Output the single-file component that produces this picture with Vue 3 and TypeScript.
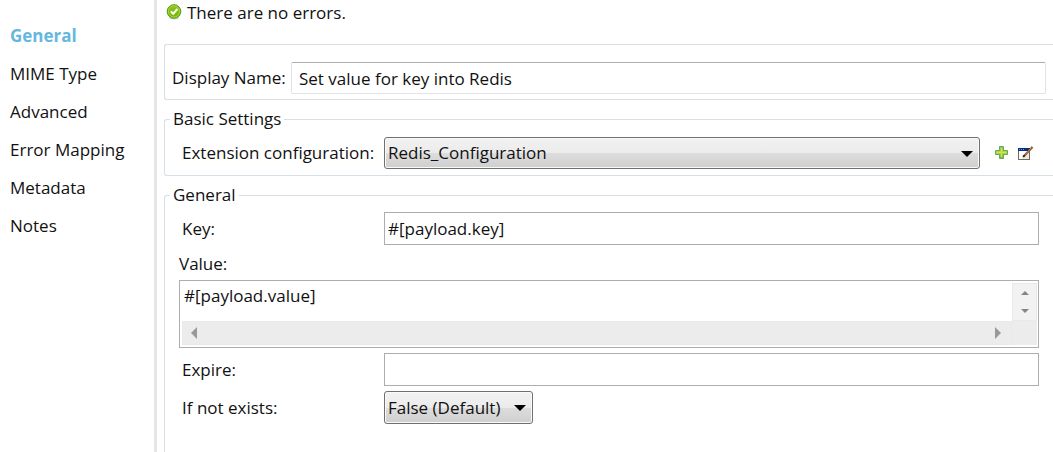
<script setup lang="ts">
import { ref } from 'vue'

const tabs: string[] = ['General', 'MIME Type', 'Advanced', 'Error Mapping', 'Metadata', 'Notes']
const active = ref('General')
const displayName = ref('Set value for key into Redis')
const config = ref('Redis_Configuration')
const key = ref('#[payload.key]')
const payload = ref('#[payload.value]')
const expire = ref('')
const ifNotExists = ref('False (Default)')
</script>

<template>
  <div class="page">
    <nav class="sidebar">
      <button
        v-for="tab in tabs"
        :key="tab"
        type="button"
        class="tab"
        :class="{ active: tab === active }"
        @click="active = tab"
      >{{ tab }}</button>
    </nav>

    <main class="main">
      <div class="status">
        <svg class="ok" width="16" height="16" viewBox="0 0 16 16" aria-hidden="true">
          <defs>
            <linearGradient id="okFill" x1="0" y1="0" x2="0" y2="1">
              <stop offset="0" stop-color="#8fc31a" />
              <stop offset="1" stop-color="#74b800" />
            </linearGradient>
          </defs>
          <ellipse cx="8" cy="14" rx="5" ry="1.5" fill="#dcdcdc" />
          <circle cx="8" cy="7.5" r="6.8" fill="url(#okFill)" stroke="#4f9a14" />
          <circle cx="8" cy="7.5" r="5.6" fill="none" stroke="#b4db55" stroke-width="0.8" />
          <path d="M4.8 7.4 7.2 9.800 11.3 5" fill="none" stroke="#fff" stroke-width="2" />
        </svg>
        <span>There are no errors.</span>
      </div>

      <section class="group name-group">
        <label for="display-name">Display Name:</label>
        <input id="display-name" v-model="displayName" class="name-input" type="text">
      </section>

      <fieldset class="group basic">
        <legend>Basic Settings</legend>
        <div class="row">
          <label class="caption" for="config">Extension configuration:</label>
          <div class="combo wide">
            <select id="config" v-model="config">
              <option>Redis_Configuration</option>
            </select>
            <svg class="arrow" width="12" height="6" viewBox="0 0 12 6" aria-hidden="true">
              <path d="M0 0H12L6 6Z" fill="#000" />
            </svg>
          </div>
          <button type="button" class="icon-button add" aria-label="Add configuration">
            <svg width="14" height="14" viewBox="0 0 14 14">
              <defs>
                <linearGradient id="plusFill" x1="0" y1="0" x2="0" y2="1">
                  <stop offset="0" stop-color="#86c66c" />
                  <stop offset="0.5" stop-color="#b9d836" />
                  <stop offset="1" stop-color="#6fb650" />
                </linearGradient>
              </defs>
              <path d="M4.500 0.500H8.500V4.500H12.500V8.500H8.500V12.500H4.500V8.500H0.500V4.500H4.500Z" fill="url(#plusFill)" stroke="#65a957" />
              <path d="M6.500 2V11M2 6.500H11" stroke="#cfe45c" fill="none" />
            </svg>
          </button>
          <button type="button" class="icon-button edit" aria-label="Edit configuration">
            <svg width="16" height="15" viewBox="0 0 16 15">
              <rect x="0.5" y="2.5" width="11" height="11" fill="#fff" stroke="#716d57" />
              <rect x="0" y="2" width="12" height="3" fill="#0a2a86" />
              <path d="M1 3.500H6" stroke="#5aa0ee" stroke-dasharray="1 1" />
              <path d="M3 13 11 5V13Z" fill="#e8e8e8" />
              <path d="M5.500 10.500 14.500 1" stroke="#6b4521" stroke-width="2" />
              <path d="M7 8.700 13.700 1.600" stroke="#e7a243" stroke-width="1" />
              <path d="M5 11 6.500 9.500" stroke="#222" stroke-width="1.500" />
            </svg>
          </button>
        </div>
      </fieldset>

      <fieldset class="group general">
        <legend>General</legend>
        <div class="row">
          <label class="caption" for="key">Key:</label>
          <input id="key" v-model="key" class="field" type="text">
        </div>
        <label class="value-label" for="value">Value:</label>
        <div class="editor">
          <textarea id="value" v-model="payload" wrap="off"></textarea>
          <div class="vbar">
            <button type="button" aria-label="Scroll up">
              <svg width="8" height="4" viewBox="0 0 8 4"><path d="M0 4 4 0 8 4Z" fill="#858585" /></svg>
            </button>
            <button type="button" aria-label="Scroll down">
              <svg width="8" height="4" viewBox="0 0 8 4"><path d="M0 0H8L4 4Z" fill="#858585" /></svg>
            </button>
          </div>
          <div class="hbar">
            <button type="button" aria-label="Scroll left">
              <svg width="6" height="12" viewBox="0 0 6 12"><path d="M6 0V12L0 6Z" fill="#999" /></svg>
            </button>
            <button type="button" aria-label="Scroll right">
              <svg width="6" height="12" viewBox="0 0 6 12"><path d="M0 0V12L6 6Z" fill="#999" /></svg>
            </button>
          </div>
          <div class="corner"></div>
        </div>
        <div class="row spaced">
          <label class="caption" for="expire">Expire:</label>
          <input id="expire" v-model="expire" class="field" type="text">
        </div>
        <div class="row spaced">
          <label class="caption" for="if-not-exists">If not exists:</label>
          <div class="combo small">
            <select id="if-not-exists" v-model="ifNotExists">
              <option>False (Default)</option>
              <option>True</option>
            </select>
            <svg class="arrow" width="12" height="6" viewBox="0 0 12 6" aria-hidden="true">
              <path d="M0 0H12L6 6Z" fill="#000" />
            </svg>
          </div>
        </div>
      </fieldset>
    </main>
  </div>
</template>

<style>
body {
  margin: 0;
  background: #fff;
}
</style>

<style scoped>
.page {
  display: flex;
  height: 100vh;
  overflow: hidden;
  background: #fff;
  color: #111;
  font: 17px/24px "Open Sans", "Noto Sans", sans-serif;
}
.page * {
  box-sizing: border-box;
}
button,
input,
select,
textarea {
  margin: 0;
  border: 0;
  font: inherit;
  color: inherit;
  outline: none;
}
.sidebar {
  flex: 0 0 157px;
  display: flex;
  flex-direction: column;
  padding-top: 17px;
  border-right: 3px solid #e6e6e6;
}
.tab {
  height: 38px;
  padding: 0 10px;
  background: none;
  text-align: left;
  white-space: nowrap;
}
.tab.active {
  color: #66b7de;
  font-weight: 700;
}
.main {
  flex: 1;
  min-width: 0;
  display: flex;
  flex-direction: column;
  padding-left: 7px;
}
.status {
  display: flex;
  align-items: center;
  gap: 5px;
  height: 26px;
  padding-left: 2px;
}
.ok {
  margin-bottom: 3px;
}
.group {
  min-width: 0;
  margin: 0;
  border: 1px solid #d5dfe5;
  border-right: 0;
  border-radius: 3px 0 0 3px;
}
.name-group {
  display: flex;
  align-items: center;
  gap: 4px;
  margin-top: 18px;
  padding: 17px 7px 5px 7px;
}
.name-group label {
  flex: 0 0 115px;
}
.name-input {
  flex: 1;
  min-width: 0;
  height: 32px;
  padding: 0 7px;
  border: 1px solid #e2e3ea;
  border-top-color: #abadb3;
  border-radius: 2px;
}
legend {
  margin-left: -9px;
  padding: 0 3px;
}
.basic,
.general {
  margin-top: 7px;
  padding: 6px 14px;
}
.general {
  flex: 1 0 auto;
  padding-top: 5px;
  border-bottom: 0;
  border-radius: 3px 0 0 0;
}
.row {
  display: flex;
  align-items: center;
}
.spaced {
  margin-top: 5px;
}
.caption {
  flex: 0 0 205px;
  padding-left: 3px;
  white-space: nowrap;
}
.combo {
  position: relative;
}
.wide {
  flex: 1;
}
.wide select {
  height: 32px;
}
.small {
  flex: 0 0 149px;
}
select {
  display: block;
  width: 100%;
  height: 33px;
  padding: 0 24px 0 3px;
  border: 1px solid #707070;
  border-radius: 3px;
  appearance: none;
  background: linear-gradient(#f2f2f2, #ebebeb 50%, #dddddd 50%, #cfcfcf);
  box-shadow: inset 0 0 0 1px #fafafa;
}
.arrow {
  position: absolute;
  top: 14px;
  right: 7px;
  pointer-events: none;
}
.icon-button {
  display: flex;
  padding: 0;
  background: none;
}
.add {
  margin-left: 15px;
}
.edit {
  margin: 0 5px 0 9px;
}
.field {
  flex: 1;
  min-width: 0;
  height: 33px;
  padding: 0 3px;
  border: 1px solid #abadb3;
}
.value-label {
  display: block;
  height: 35px;
  line-height: 37px;
}
.editor {
  display: grid;
  grid-template-columns: 1fr 25px;
  grid-template-rows: 38px 24px;
  padding: 2px 1px 2px 2px;
  border: 1px solid #abadb3;
}
textarea {
  display: block;
  padding: 1px 2px;
  resize: none;
  overflow: hidden;
  background: none;
}
.vbar,
.hbar {
  display: flex;
  justify-content: space-between;
  background: #f2f2f2;
  border: 1px solid #e9e9e9;
}
.vbar {
  flex-direction: column;
}
.hbar {
  padding-right: 2px;
  background: #ececec;
}
.vbar button,
.hbar button {
  display: flex;
  align-items: center;
  justify-content: center;
  padding: 0;
  background: none;
}
.vbar button {
  height: 18px;
}
.hbar button {
  width: 22px;
}
.corner {
  background: #ececec;
}
</style>
